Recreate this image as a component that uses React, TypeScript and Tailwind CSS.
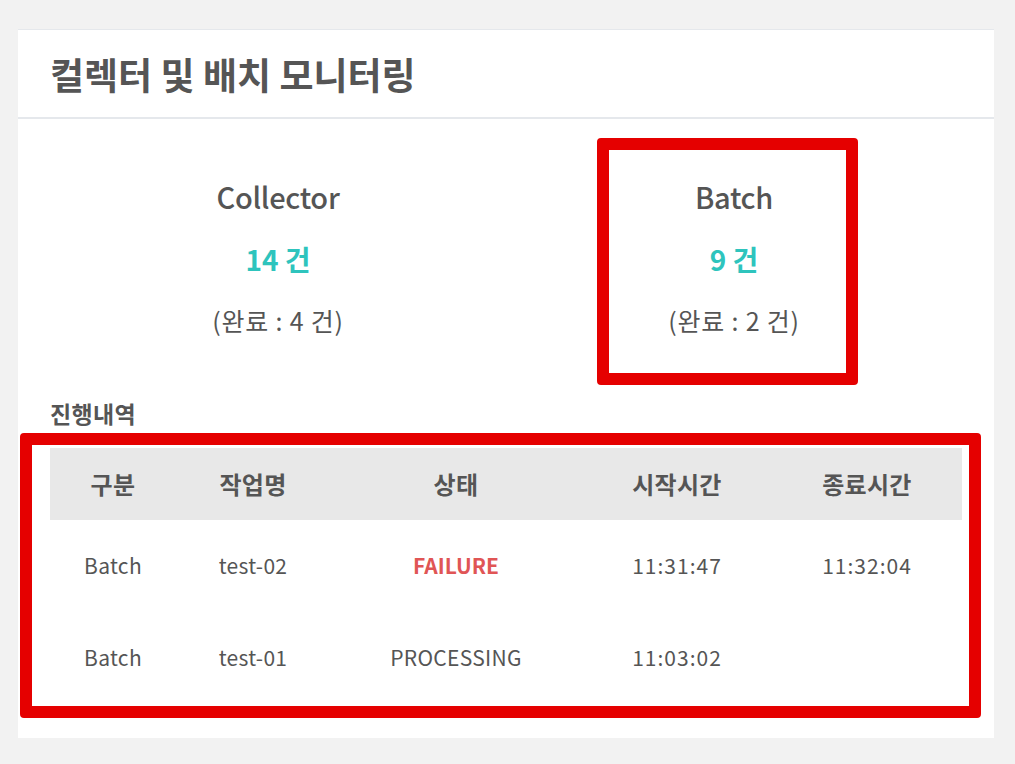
import React from "react";

const font = { fontFamily: '"Noto Sans CJK KR", "Noto Sans", sans-serif' };

const rows = [
  { type: "Batch", name: "test-02", status: "FAILURE", start: "11:31:47", end: "11:32:04" },
  { type: "Batch", name: "test-01", status: "PROCESSING", start: "11:03:02", end: "" },
];

function Stat({ title, count, done }: { title: string; count: string; done: string }) {
  return (
    <div className="flex flex-col items-center text-[#555]">
      <div className="text-[29px] leading-[34px] font-medium tracking-[-0.3px]">{title}</div>
      <div className="mt-[31px] text-[28px] leading-[30px] font-bold text-[#2ec4bd]">{count}</div>
      <div className="mt-[31px] text-[25px] leading-[30px] tracking-[0.8px] whitespace-pre">{done}</div>
    </div>
  );
}

export default function App() {
  return (
    <div className="min-h-[764px] w-[1015px] bg-[#f2f2f2] pt-[29px] pl-[18px]" style={font}>
      <div className="relative w-[976px] h-[709px] bg-white border-t border-[#e5e8ec]">
        <div className="h-[89px] border-b-2 border-[#e5e8ec] pl-[32px] flex items-center">
          <h1 className="text-[37px] font-bold text-[#555] tracking-[0px] leading-none pt-[2px]">
            컬렉터 및 배치 모니터링
          </h1>
        </div>
        <div className="grid grid-cols-2 px-[32px] pt-[60px]">
          <Stat title="Collector" count="14 건" done="(완료 : 4 건)" />
          <Stat title="Batch" count="9 건" done="(완료 : 2 건)" />
        </div>
        <div className="px-[32px] mt-[65px]">
          <div className="text-[23px] font-bold text-[#555] leading-[26px] tracking-[0.3px]">진행내역</div>
          <table className="mt-[22px] w-[912px] table-fixed text-[#555] text-[21px] tracking-[0.3px]">
            <colgroup>
              <col className="w-[126px]" />
              <col className="w-[154px]" />
              <col className="w-[252px]" />
              <col className="w-[190px]" />
              <col className="w-[190px]" />
            </colgroup>
            <thead>
              <tr className="bg-[#e8e8e8] h-[72px]">
                {["구분", "작업명", "상태", "시작시간", "종료시간"].map((h) => (
                  <th key={h} className="font-bold text-center text-[24px] tracking-[0.3px]">
                    {h}
                  </th>
                ))}
              </tr>
            </thead>
            <tbody>
              {rows.map((r) => (
                <tr key={r.name} className="h-[92px]">
                  <td className="text-center">{r.type}</td>
                  <td className="text-center">{r.name}</td>
                  <td className={r.status === "FAILURE" ? "text-center font-bold text-[#e05555] tracking-normal" : "text-center"}>
                    {r.status}
                  </td>
                  <td className="text-center tracking-[1px]">{r.start}</td>
                  <td className="text-center tracking-[1px]">{r.end}</td>
                </tr>
              ))}
            </tbody>
          </table>
        </div>
        <div className="absolute left-[579px] top-[108px] w-[261px] h-[247px] border-[12px] border-[#e50000] rounded-[4px] pointer-events-none" />
        <div className="absolute left-[2px] top-[403px] w-[961px] h-[285px] border-[12px] border-[#e50000] rounded-[4px] pointer-events-none" />
      </div>
    </div>
  );
}
